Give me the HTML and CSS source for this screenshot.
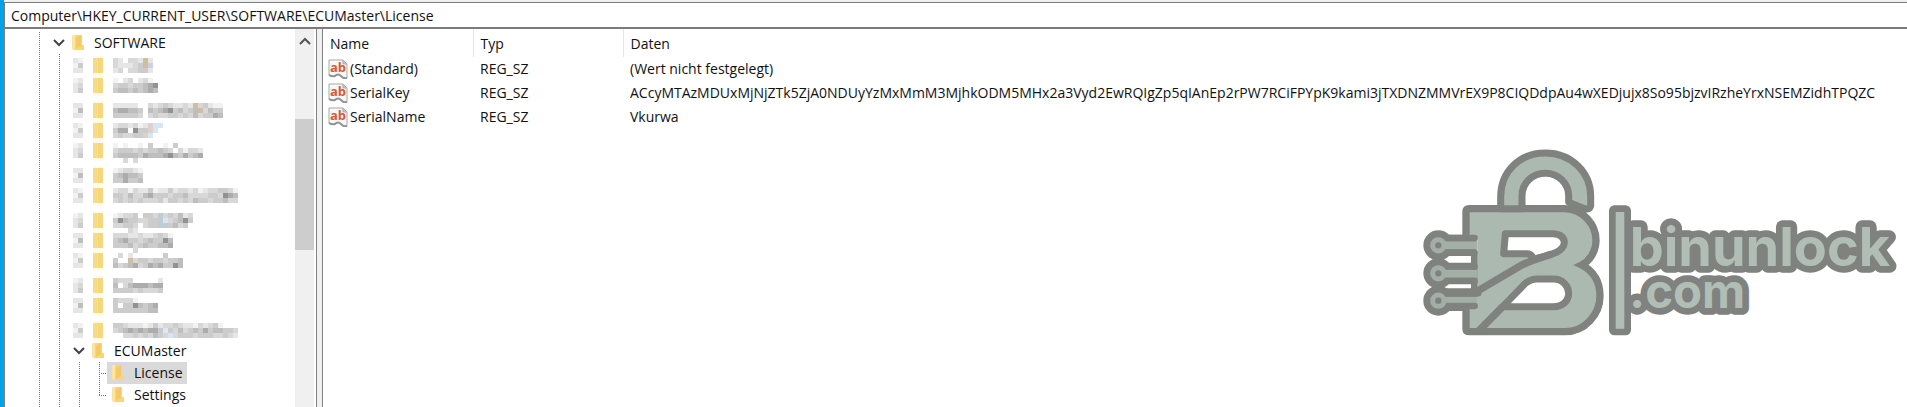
FILE: index.html
```html
<!DOCTYPE html>
<html lang="de">
<head>
<meta charset="utf-8">
<title>Registrierungs-Editor</title>
<link rel="stylesheet" href="styles.css">
</head>
<body>
<svg class="defs" aria-hidden="true">
  <symbol id="folder" viewBox="0 0 12 18">
    <path d="M0 2 Q0 1 1 1H9V15H0Z" fill="#fbe8ae"/>
    <path d="M3 1H10V11H12V16H3Z" fill="#f8d775"/>
    <path d="M4 4L9 1V12L4 15Z" fill="#f3ca66"/>
    <path d="M0 2L3 4V17L0 15Z" fill="#fbe3a0"/>
  </symbol>
  <symbol id="chevron" viewBox="0 0 12 8">
    <path d="M1 1L6 6L11 1" fill="none" stroke="currentColor" stroke-width="2"/>
  </symbol>
  <symbol id="string-value" viewBox="0 0 20 20">
    <path d="M1 1H15L19 5V19Q15 20 13 17Q10 14 7 17Q4 18 1 16Z" fill="#f7f7f8" stroke="#a9a9ad"/>
    <path d="M1 16Q4 18 7 17Q10 14 13 17Q15 20 19 19" fill="none" stroke="#929297" stroke-width="2"/>
    <path d="M15 1V5H19Z" fill="#c9c9ce" stroke="#a9a9ad"/>
    <text class="ab" x="2" y="13">ab</text>
  </symbol>
</svg>
<div class="window">
  <form class="address"><input class="address-input" type="text" aria-label="Adresse" value="Computer\HKEY_CURRENT_USER\SOFTWARE\ECUMaster\License"></form>
  <div class="panes">
    <nav class="tree-pane" aria-label="Schlüssel">
      <ul class="tree">
        <li class="row"><i class="guide"></i><button class="toggle" aria-label="SOFTWARE reduzieren"><svg class="chevron"><use href="#chevron"/></svg></button><span class="key"><svg class="folder"><use href="#folder"/></svg>SOFTWARE</span></li>
        <li id="masked"></li>
        <li class="row"><i class="guide"></i><i class="guide"></i><button class="toggle" aria-label="ECUMaster reduzieren"><svg class="chevron"><use href="#chevron"/></svg></button><span class="key"><svg class="folder"><use href="#folder"/></svg>ECUMaster</span></li>
        <li class="row"><i class="guide"></i><i class="guide"></i><i class="guide"></i><i class="guide branch"></i><span class="key selected"><svg class="folder"><use href="#folder"/></svg>License</span></li>
        <li class="row"><i class="guide"></i><i class="guide"></i><i class="guide"></i><i class="guide branch last"></i><span class="key"><svg class="folder"><use href="#folder"/></svg>Settings</span></li>
        <li class="row"><i class="guide"></i><i class="guide"></i><i class="guide"></i></li>
      </ul>
      <div class="scrollbar">
        <button class="scroll-up" aria-label="Nach oben"><svg class="chevron up"><use href="#chevron"/></svg></button>
        <div class="thumb"></div>
      </div>
    </nav>
    <main class="values">
      <table class="list">
        <thead><tr><th class="name">Name</th><th class="type">Typ</th><th>Daten</th></tr></thead>
        <tbody>
          <tr><td><span class="value"><svg class="icon"><use href="#string-value"/></svg>(Standard)</span></td><td>REG_SZ</td><td>(Wert nicht festgelegt)</td></tr>
          <tr><td><span class="value"><svg class="icon"><use href="#string-value"/></svg>SerialKey</span></td><td>REG_SZ</td><td>ACcyMTAzMDUxMjNjZTk5ZjA0NDUyYzMxMmM3MjhkODM5MHx2a3Vyd2EwRQIgZp5qIAnEp2rPW7RCiFPYpK9kami3jTXDNZMMVrEX9P8CIQDdpAu4wXEDjujx8So95bjzvIRzheYrxNSEMZidhTPQZC</td></tr>
          <tr><td><span class="value"><svg class="icon"><use href="#string-value"/></svg>SerialName</span></td><td>REG_SZ</td><td>Vkurwa</td></tr>
        </tbody>
      </table>
      <svg class="watermark" viewBox="0 0 1470 600" role="img" aria-label="binunlock.com">
        <g fill="#7f827f">
          <circle cx="85" cy="313" r="45"/><circle cx="85" cy="397" r="45"/><circle cx="85" cy="479" r="45"/>
          <path d="M85 281H200V345H85ZM85 365H200V429H85ZM85 442H210V510H85ZM183 340H215V460H183Z"/>
        </g>
        <path d="M168 290V212Q168 203 178 203H465C520 205 558 250 558 298C558 330 540 360 515 372C550 390 570 420 570 465C570 520 525 572 465 572H178Q168 572 168 564V500H202V290Z" fill="#abb9b0"/>
        <path d="M168 290V212Q168 203 178 203H465C520 205 558 250 558 298C558 330 540 360 515 372C550 390 570 420 570 465C570 520 525 572 465 572H178Q168 572 168 564V500" fill="none" stroke="#7f827f" stroke-width="22"/>
        <path d="M272 203V168C272 90 330 36 406 36C485 36 542 95 542 165V195Q538 206 524 203L476 184V165C476 128 446 97 406 97C368 97 336 125 336 165V203Z" fill="#abb9b0" stroke="#7f827f" stroke-width="21" stroke-linejoin="round"/>
        <g fill="#fff" stroke="#7f827f" stroke-width="21" stroke-linejoin="round">
          <path d="M286 278H430Q463 280 463 306C459 334 425 340 370 355Q366 338 350 338H281Z"/>
          <path d="M278 497L345 428Q362 414 380 414H430C458 414 476 435 476 457C476 480 458 497 430 497Z"/>
        </g>
        <path d="M196 454L330 375C370 354 395 350 425 339M278 497L204 572" fill="none" stroke="#7f827f" stroke-width="22"/>
        <path d="M85 301H202V325H85ZM85 386H202V410H85ZM85 467H202V491H85Z" fill="#a3b0a8"/>
        <path d="M200 467H222V491H200Z" fill="#abb9b0"/>
        <path d="M100 291H194M100 335H194M100 376H194M100 420H194M100 457H205M100 495H194" fill="none" stroke="#7f827f" stroke-width="19" stroke-linecap="round"/>
        <g fill="#7f827f" stroke="#a2aea6" stroke-width="15">
          <circle cx="85" cy="313" r="17"/><circle cx="85" cy="397" r="17"/><circle cx="85" cy="479" r="17"/>
        </g>
        <g class="wordmark">
          <text class="domain" x="658" y="500">.com</text>
          <text class="brand" x="659" y="375">binunlock</text>
        </g>
        <rect x="607" y="203" width="46" height="370" rx="6" fill="#b0beb5" stroke="#7f827f" stroke-width="20"/>
      </svg>
    </main>
  </div>
</div>
<script src="script.js"></script>
</body>
</html>
```

FILE: styles.css
```css
* { box-sizing: border-box; }
body {
  margin: 0;
  background: #fff;
  color: #111;
  font: 14px/22px "Segoe UI", "Open Sans", "Noto Sans", sans-serif;
}
.defs { position: absolute; width: 0; height: 0; }
.window {
  display: flex;
  flex-direction: column;
  height: 100vh;
  overflow: hidden;
  border-left: 4px solid #00a2e8;
  background: #f0f0f0;
}
.address {
  margin: 2px 0 0;
  border: solid #7b7b7b;
  border-width: 1px 0 2px 1px;
  background: #fff;
}
.address-input {
  display: block;
  width: 100%;
  height: 24px;
  padding: 0 6px;
  border: 0;
  background: none;
  color: inherit;
  font: inherit;
}
.panes { display: flex; flex: 1; min-height: 0; }
.tree-pane {
  display: flex;
  flex: none;
  width: 313px;
  margin-right: 5px;
  border: solid #828282;
  border-width: 0 1px;
  background: #fff;
}
.tree {
  flex: 1;
  margin: 0;
  padding: 3px 0 0 24px;
  overflow: hidden;
  list-style: none;
}
.row { display: flex; height: 22px; }
.guide {
  flex: none;
  width: 20px;
  background: repeating-linear-gradient(#777 0 1px, #fff 1px 2px) 10px 0 / 1px 100% no-repeat;
}
.branch {
  width: 18px;
  background:
    repeating-linear-gradient(#777 0 1px, #fff 1px 2px) 10px 0 / 1px 100% no-repeat,
    repeating-linear-gradient(90deg, #777 0 1px, #fff 1px 2px) 10px 11px / 8px 1px no-repeat;
}
.branch.last { background-size: 1px 11px, 8px 1px; }
.toggle {
  display: grid;
  place-items: center;
  width: 20px;
  padding: 0;
  border: 0;
  background: none;
  color: #444;
}
.chevron { width: 12px; height: 8px; }
.up { transform: rotate(180deg); }
.key { display: flex; align-items: center; gap: 10px; padding: 0 4px 0 3px; }
.branch + .key { padding-left: 5px; }
.selected { background: #d9d9d9; }
.folder { width: 12px; height: 18px; }
.mosaic { display: block; width: 200px; height: 22px; overflow: visible; }
.scrollbar { width: 21px; padding-right: 2px; background: linear-gradient(90deg, #f0f0f0 19px, #fff 19px); }
.scroll-up {
  display: grid;
  place-items: center;
  width: 100%;
  height: 24px;
  padding: 0;
  border: 0;
  background: none;
  color: #555;
}
.thumb { height: 131px; margin-top: 66px; background: #cdcdcd; }
.values {
  position: relative;
  flex: 1;
  min-width: 0;
  overflow: hidden;
  border-left: 1px solid #828282;
  background: #fff;
}
.list { width: 100%; border-collapse: collapse; table-layout: fixed; }
th, td { padding: 0 7px; font-weight: 400; text-align: left; white-space: nowrap; }
th { height: 28px; padding-top: 2px; border-right: 1px solid #e5e5e5; }
th:last-child, td:last-child { padding-right: 0; border-right: 0; }
.name, .type { width: 150px; }
td { height: 24px; }
td:first-child { padding-left: 5px; }
.value { display: flex; align-items: center; gap: 2px; }
.icon { width: 20px; height: 20px; }
.ab { fill: #d65a32; font: 700 13px "Open Sans", sans-serif; }
.watermark { position: absolute; top: 112px; right: 7px; width: 490px; height: 200px; }
.wordmark {
  fill: #b0beb5;
  stroke: #7f827f;
  stroke-width: 40px;
  stroke-linejoin: round;
  paint-order: stroke;
  font-family: Inter, sans-serif;
  font-weight: 700;
}
.brand { font-size: 162px; }
.domain { font-size: 142px; }
```

FILE: script.js
```js
// Masked keys: each digit is the darkness of one 5px cell, a dot is an empty cell.
const shades = {
  1: "#f2f2f2", 2: "#e6e6e6", 3: "#d8d8d8", 4: "#cccccc", 5: "#bebebe",
  6: "#acacac", 7: "#929292", t: "#cdbf9f", b: "#d6e6f4", p: "#ddd2cb", l: "#cfcfe2", s: "#bfccd2"
};
const keys = [
  [4, ["32.332t2", "322234tl", "23.33442"]],
  [2, ["1.23.231.", "344344567", "455454565"]],
  [5, ["22222..323432232t34211", "566554.5456745345t3544", "444443.343344343534465"]],
  [3, ["2332312pbb", "466.744pb", "343344pb"]],
  [1, ["1.1..1.4..1.4.....", "344434344543.31332", "455554655567546456", "..3.3"]],
  [4, ["123321", "456554", "446445"]],
  [2, ["2331322412242332312334431", "4435335644434453333443765", "3434343334244343544344533"]],
  [5, ["12334.443s343523", "475443344sb34574", "33443.344ss4534.", "...32"]],
  [3, ["333223223431", "456443454475", "444534544556", "....3"]],
  [1, [".3.2......4...", "4..t3443443445", "53456346564475"]],
  [4, ["4333.....2", "5.35666566", "4444343334"]],
  [2, ["43331....", "4.4475456", "444444455"]],
  [5, ["4432221242334322132341", "345656566s243534546455443", "..334343543b3444344433432"]]
];
const rect = (x, y, w, h, fill) => `<rect x="${x}" y="${y}" width="${w}" height="${h}" fill="${fill}"/>`;
const cells = (lines, x, y) => lines.map((line, r) => [...line].map((c, i) =>
  shades[c] ? rect(x + i * 5, y + r * 5, 5, 5, shades[c]) : "").join("")).join("");

document.getElementById("masked").innerHTML = keys.map(([top, lines], n) => {
  const arrow = n % 3 === 0 ? ["21", "14", "22"] : n % 3 === 1 ? ["12", "23", "24"] : ["22", "15", "22"];
  const folder = rect(64, top - 2, 10, 20, "#fffbea") + rect(64, top, 10, 15, "#f8dc84") +
    rect(69, top, 5, 15, "#f6d77c");
  return `<div class="row"><i class="guide"></i><i class="guide"></i><svg class="mosaic" aria-hidden="true">` +
    `<g transform="translate(-40 0)">${cells(arrow, 44, top)}${folder}${cells(lines, 84, top)}</g></svg></div>`;
}).join("");
```
